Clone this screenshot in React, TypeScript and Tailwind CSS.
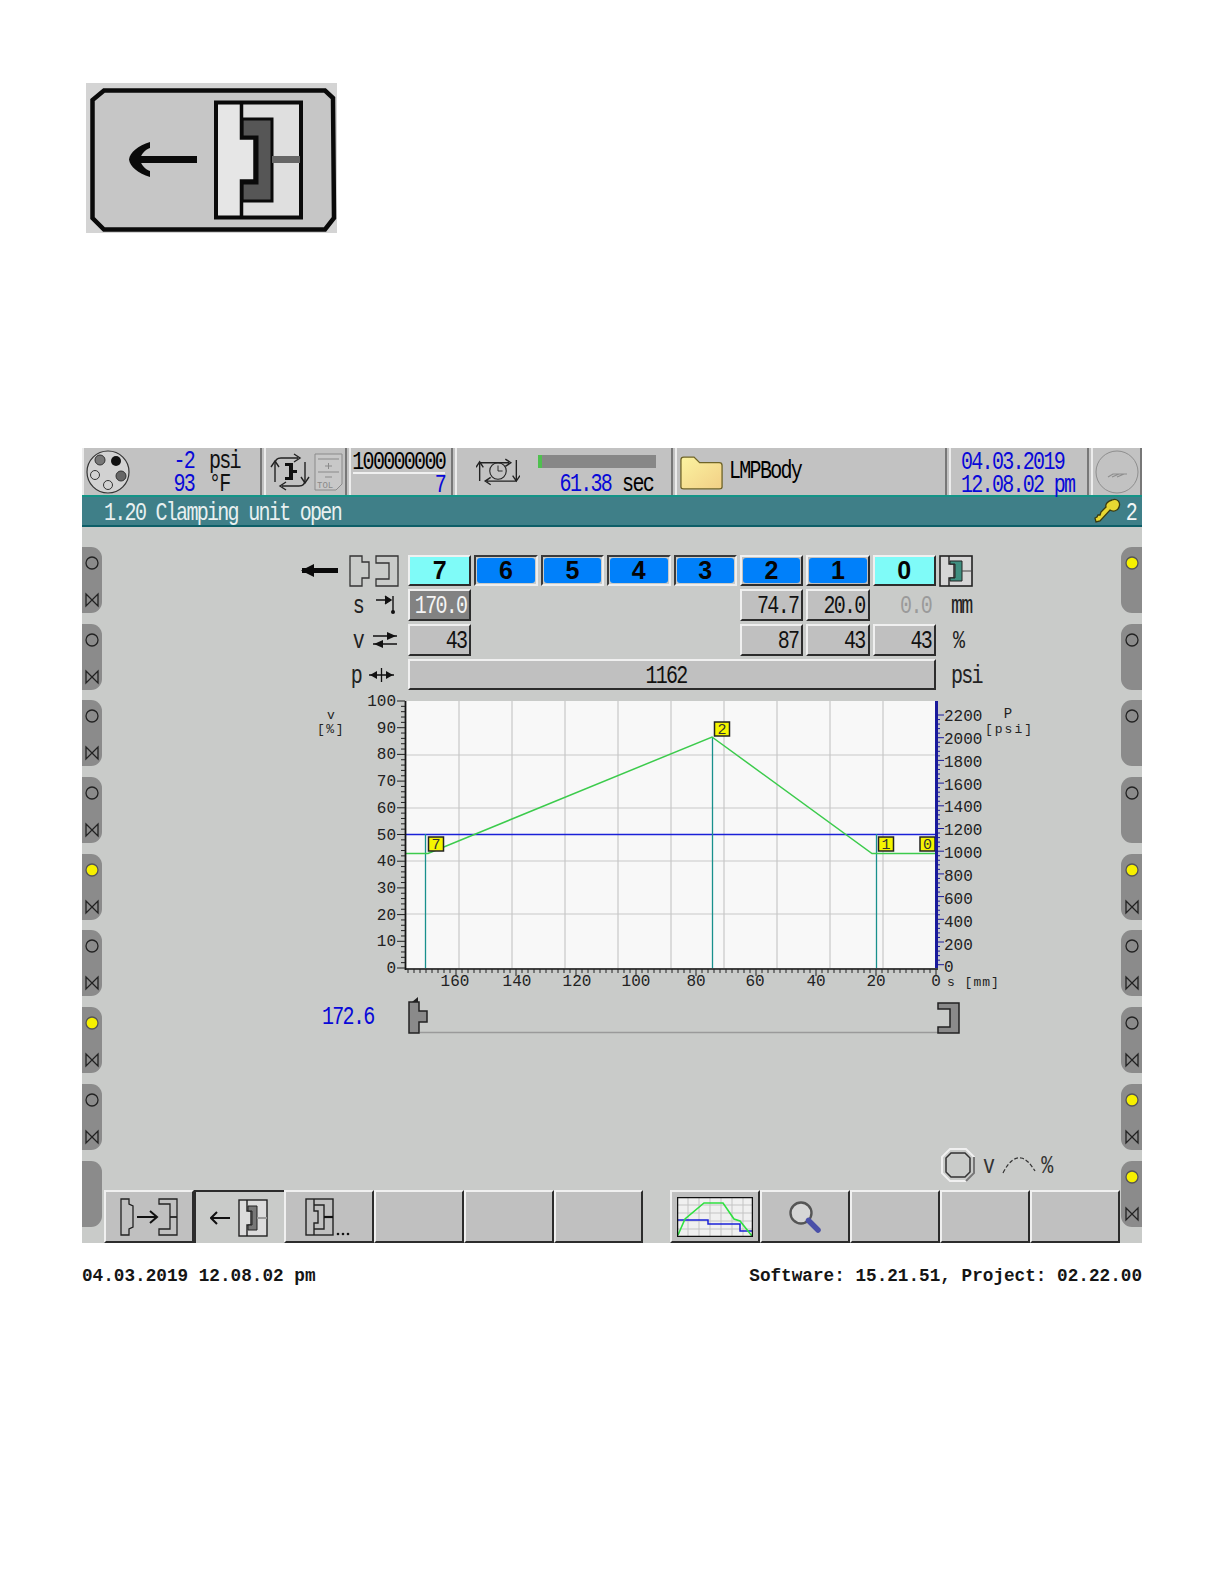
import React from "react";

const T = "inline-block leading-none text-[20px] tracking-[-1.7px] scale-y-125 translate-y-[2px] [font-family:'Liberation_Mono',monospace]";
const TS = "inline-block leading-[16px] text-[20px] tracking-[-1.7px] scale-y-125 translate-y-[2px] [font-family:'Liberation_Mono',monospace]";
const RAISED = "border-2 border-t-[#f0f0f0] border-l-[#f0f0f0] border-r-[#2c2c2c] border-b-[#2c2c2c] bg-[#c0c0c0]";
const SUNK = "border-2 border-t-[#3a3a3a] border-l-[#3a3a3a] border-r-[#eeeeee] border-b-[#eeeeee] bg-[#c9cbc9]";
const STAT = "border-l-2 border-r-2 border-l-[#ececec] border-r-[#777777] bg-[#c2c2c2] h-full relative flex items-center";

function Pill({ side, yellow, bow }: { side: "l" | "r"; yellow?: boolean; bow?: boolean }) {
  return (
    <div className={side === "l" ? "h-[66px] w-[20px] bg-[#8b8b8b] rounded-r-[11px] flex flex-col items-center pt-[8px] pr-[1px]" : "h-[66px] w-[21px] ml-[1px] bg-[#8b8b8b] rounded-l-[11px] flex flex-col items-center pt-[8px] pl-[1px]"}>
      <svg width="16" height="16" viewBox="0 0 16 16">
        <circle cx="8" cy="8" r="6" fill={yellow ? "#f6f000" : "none"} stroke={yellow ? "#555" : "#222"} strokeWidth="1.3" />
      </svg>
      {bow && (
        <svg width="16" height="16" viewBox="0 0 16 16" className="mt-[21px]">
          <path d="M2 2 L14 14 V2 L2 14 Z" fill="none" stroke="#222" strokeWidth="1.3" />
        </svg>
      )}
    </div>
  );
}

function ZoneBtn({ n, mode }: { n: string; mode: "cyan" | "blueUp" | "blueDown" }) {
  const cls = mode === "blueDown" ? SUNK : RAISED;
  const inner = mode === "cyan" ? "bg-[#7ffbf8] m-0" : "bg-[#0080fa] rounded-[3px] m-[1px]";
  return (
    <div className={`h-[31px] flex ${cls}`}>
      <div className={`flex-1 flex items-center justify-center ${inner}`}>
        <span className="leading-none text-[25px] font-bold text-[#050505] [font-family:'Liberation_Sans',sans-serif]">{n}</span>
      </div>
    </div>
  );
}

function Val({ v, cls, text }: { v: string; cls?: string; text?: string }) {
  return (
    <div className={`h-[32px] flex items-center justify-end pr-[3px] ${cls ?? ""} ${RAISED}`}>
      <span className={`${T} ${text ?? "text-[#111]"}`}>{v}</span>
    </div>
  );
}

function BigMold({ viewBox, w, h }: { viewBox: string; w: number; h: number }) {
  return (
    <svg width={w} height={h} viewBox={viewBox}>
      <rect x="86" y="83" width="251" height="150" fill="#d4d4d4" />
      <polygon points="104,90.5 325,90.5 333,98 334,218 325,229.5 104,229.5 92.5,218 92.5,100" fill="#c6c6c6" stroke="#0a0a0a" strokeWidth="4.5" />
      <rect x="216" y="102.5" width="85" height="115" fill="#dfdfdf" stroke="#0a0a0a" strokeWidth="4" />
      <path d="M218 105 H241.5 V138 H255 V181 H241.5 V215 H218 Z" fill="#e6e6e6" stroke="none" />
      <path d="M242 119 H272 V201 H242 V183 H257 V137 H242 Z" fill="#565656" stroke="#0a0a0a" strokeWidth="3" />
      <rect x="272" y="156" width="28" height="7" fill="#666" />
      <path d="M241.5 102 V138 H255 V181 H241.5 V218" fill="none" stroke="#0a0a0a" strokeWidth="3.5" />
      <rect x="136" y="156" width="61" height="7" fill="#0a0a0a" />
      <path d="M150 142 C138 146 130 152 129 159.5 C130 167 138 173 150 177 L150 171 C145 169 141 165 140 159.5 C141 154 145 150 150 148 Z" fill="#0a0a0a" />
    </svg>
  );
}

const vLabels = [100, 90, 80, 70, 60, 50, 40, 30, 20, 10, 0];
const pLabels = [2200, 2000, 1800, 1600, 1400, 1200, 1000, 800, 600, 400, 200, 0];
const gridX = [459, 512, 565, 618, 671, 724, 777, 830, 883];
const gridY = [755, 808, 861, 914];

function Marker({ x, y, n }: { x: number; y: number; n: string }) {
  return (
    <g>
      <rect x={x} y={y} width="15" height="14" fill="#f5f500" stroke="#222" strokeWidth="1.5" />
      <text x={x + 7.5} y={y + 11.5} textAnchor="middle" fontSize="15" fill="#333" fontFamily="'Liberation Mono',monospace">{n}</text>
    </g>
  );
}

function Chart() {
  const txt = { fontFamily: "'Liberation Mono',monospace", fontSize: 16, fill: "#222" };
  return (
    <svg width="730" height="307" viewBox="310 690 730 307" className="block">
      <rect x="405" y="701" width="531" height="267" fill="#f8f8f8" />
      {gridX.map((x) => <line key={x} x1={x} x2={x} y1="701" y2="968" stroke="#c8c8c8" strokeWidth="1.2" />)}
      {gridY.map((y) => <line key={y} x1="405" x2="936" y1={y} y2={y} stroke="#c8c8c8" strokeWidth="1.2" />)}
      <line x1="405" x2="936" y1="834.5" y2="834.5" stroke="#1a20d8" strokeWidth="1.3" />
      <line x1="425.5" x2="425.5" y1="834" y2="968" stroke="#18908c" strokeWidth="1.3" />
      <line x1="712.5" x2="712.5" y1="737" y2="968" stroke="#18908c" strokeWidth="1.3" />
      <line x1="876.5" x2="876.5" y1="834" y2="968" stroke="#18908c" strokeWidth="1.3" />
      <polyline points="405,853.5 428,853.5 712,737 872,853.5 936,853.5" fill="none" stroke="#3ccb4c" strokeWidth="1.5" />
      <Marker x={428.5} y={837} n="7" />
      <Marker x={714.5} y={722} n="2" />
      <Marker x={878.5} y={837} n="1" />
      <Marker x={920} y={837} n="0" />

      <line x1="405.5" x2="405.5" y1="701" y2="970" stroke="#151515" strokeWidth="1.8" />
      <line x1="405" x2="938" y1="969" y2="969" stroke="#151515" strokeWidth="1.6" />
      {Array.from({ length: 51 }, (_, i) => (
        <line key={i} x1={i % 5 === 0 ? 397 : 401} x2="405" y1={701 + i * 5.34} y2={701 + i * 5.34} stroke="#222" strokeWidth="1" />
      ))}
      {vLabels.map((v, i) => (
        <text key={v} x="396" y={706 + i * 26.7} textAnchor="end" {...txt}>{v}</text>
      ))}
      {Array.from({ length: 89 }, (_, i) => (
        <line key={i} x1={936 - i * 6} x2={936 - i * 6} y1="969" y2={i % 10 === 0 ? 976 : 973} stroke="#222" strokeWidth="1" />
      ))}
      <text x="455" y="986" textAnchor="middle" {...txt}>160</text>
      <text x="517" y="986" textAnchor="middle" {...txt}>140</text>
      <text x="577" y="986" textAnchor="middle" {...txt}>120</text>
      <text x="636" y="986" textAnchor="middle" {...txt}>100</text>
      <text x="696" y="986" textAnchor="middle" {...txt}>80</text>
      <text x="755" y="986" textAnchor="middle" {...txt}>60</text>
      <text x="816" y="986" textAnchor="middle" {...txt}>40</text>
      <text x="876" y="986" textAnchor="middle" {...txt}>20</text>
      <text x="936" y="986" textAnchor="middle" {...txt}>0</text>
      <text x="947" y="986" {...txt} fontSize="13" letterSpacing="1">s [mm]</text>

      <line x1="936.5" x2="936.5" y1="701" y2="968" stroke="#1a1a9c" strokeWidth="3" />
      {Array.from({ length: 56 }, (_, i) => (
        <line key={i} x1="937" x2={i % 5 === 0 ? 944 : 940} y1={715 + i * 4.54} y2={715 + i * 4.54} stroke="#1a1a9c" strokeWidth="1" />
      ))}
      {pLabels.map((v, i) => (
        <text key={v} x="944" y={721 + i * 22.85} {...txt}>{v}</text>
      ))}
      <text x="331" y="719" textAnchor="middle" {...txt} fontSize="13">v</text>
      <text x="331" y="733" textAnchor="middle" {...txt} fontSize="13" letterSpacing="1.5">[%]</text>
      <text x="1008" y="718" textAnchor="middle" {...txt} fontSize="14">P</text>
      <text x="985" y="733" {...txt} fontSize="13" letterSpacing="2">[psi]</text>
    </svg>
  );
}

function Toolbar() {
  const plain = `h-[53px] w-[90px] ${RAISED}`;
  return (
    <div className="flex h-[53px] mt-auto w-[1016px]">
      <div className={`${plain} flex items-center justify-center`}>
        <svg width="60" height="40" viewBox="0 0 60 40">
          <path d="M2 2 H10 V7 L14 9 V30 L10 32 V38 H2 Z" fill="none" stroke="#222" strokeWidth="1.3" />
          <path d="M40 2 H58 V38 H40 V32 H51 V7 H40 Z" fill="none" stroke="#222" strokeWidth="1.3" />
          <path d="M51 20 H58" stroke="#222" strokeWidth="1.8" />
          <path d="M18 20 H37 M31 14 L38 20 L31 26" fill="none" stroke="#111" strokeWidth="2" />
        </svg>
      </div>
      <div className="h-[53px] w-[90px] border-t-2 border-l-2 border-t-[#2c2c2c] border-l-[#2c2c2c] bg-[#c9cbc9] flex items-center justify-center">
        <svg width="60" height="40" viewBox="0 0 60 40">
          <path d="M1 20 H20 M7 14 L1 20 L7 26" fill="none" stroke="#111" strokeWidth="2" />
          <rect x="29" y="2" width="28" height="36" fill="#dcdcdc" stroke="#222" strokeWidth="1.4" />
          <path d="M37 2 V13 H41 V27 H37 V38" fill="none" stroke="#222" strokeWidth="1.4" />
          <path d="M38 8 H47 V32 H38 V27 H42 V13 H38 Z" fill="#777" stroke="#222" strokeWidth="1" />
          <path d="M47 20 H57" stroke="#999" strokeWidth="2" />
        </svg>
      </div>
      <div className={`${plain} flex items-center justify-center`}>
        <svg width="60" height="40" viewBox="0 0 60 40">
          <rect x="7" y="2" width="27" height="36" fill="none" stroke="#222" strokeWidth="1.4" />
          <path d="M15 2 V14 H19 V26 H15 V38" fill="none" stroke="#222" strokeWidth="1.4" />
          <path d="M15 8 H25 V32 H15" fill="none" stroke="#222" strokeWidth="1.4" />
          <path d="M25 20 H34" stroke="#111" strokeWidth="2.2" />
          <circle cx="39" cy="37" r="1.3" fill="#111" /><circle cx="44" cy="37" r="1.3" fill="#111" /><circle cx="49" cy="37" r="1.3" fill="#111" />
        </svg>
      </div>
      <div className={plain} />
      <div className={plain} />
      <div className={plain} />
      <div className="w-[27px] h-[53px]" />
      <div className={`${plain} flex items-center justify-center`}>
        <svg width="76" height="40" viewBox="0 0 76 40" className="bg-[#f0f0f0]">
          {[11, 22, 33, 44, 55, 66].map((x) => <line key={x} x1={x} x2={x} y1="0" y2="40" stroke="#c4c4c4" />)}
          {[8, 16, 24, 32].map((y) => <line key={y} x1="0" x2="76" y1={y} y2={y} stroke="#c4c4c4" />)}
          <polyline points="1,23 31,23 31,27 63,27 63,34 75,34" fill="none" stroke="#1a20d8" strokeWidth="1.5" />
          <polyline points="1,38 8,22 27,6 46,6 57,22 63,24 75,39" fill="none" stroke="#2fe040" strokeWidth="1.6" />
          <rect x="0.5" y="0.5" width="75" height="39" fill="none" stroke="#111" strokeWidth="1.5" />
        </svg>
      </div>
      <div className={`${plain} flex items-center justify-center`}>
        <svg width="36" height="36" viewBox="0 0 36 36">
          <circle cx="14" cy="14" r="10.5" fill="#d6d6d6" stroke="#555" strokeWidth="2.4" />
          <path d="M21.5 21.5 L31 31" stroke="#4a50a8" strokeWidth="5.5" strokeLinecap="round" />
        </svg>
      </div>
      <div className={plain} />
      <div className={plain} />
      <div className={plain} />
    </div>
  );
}

export default function App() {
  const leftPills = [false, false, false, false, true, false, true, false];
  const rightPills = [true, false, false, false, true, false, false, true, true];
  return (
    <div className="w-[1224px] h-[1584px] bg-white pt-[83px] overflow-hidden [font-family:'Liberation_Mono',monospace]">
      <div className="ml-[86px] h-[150px]">
        <BigMold viewBox="86 83 251 150" w={251} h={150} />
      </div>

      <div className="ml-[82px] mt-[215px] w-[1060px]">
        {/* status bar */}
        <div className="flex h-[47px] bg-[#c2c2c2] gap-[2px]">
          <div className={`${STAT} w-[180px] border-l-0`}>
            <svg width="46" height="46" viewBox="0 0 46 46" className="ml-[1px]">
              <circle cx="23" cy="23" r="21" fill="#d2d2d2" stroke="#333" strokeWidth="1.2" />
              <circle cx="15" cy="11" r="5" fill="#777" stroke="#333" />
              <circle cx="31" cy="12" r="5" fill="#111" />
              <circle cx="36" cy="27" r="5" fill="#666" stroke="#333" />
              <circle cx="10" cy="26" r="4.5" fill="none" stroke="#333" />
              <circle cx="23" cy="36" r="4.5" fill="none" stroke="#333" />
            </svg>
            <div className="ml-[27px] flex flex-col gap-[7px] text-[#111]">
              <div className="flex w-[88px]"><span className={`${TS} w-[36px] text-right text-[#0808d8]`}>-2</span><span className={`${TS} ml-[15px] tracking-[-1.5px]`}>psi</span></div>
              <div className="flex w-[88px]"><span className={`${TS} w-[36px] text-right text-[#0808d8]`}>93</span><span className={`${TS} ml-[15px]`}>°F</span></div>
            </div>
          </div>
          <div className={`${STAT} w-[83px] justify-center gap-[2px]`}>
            <svg width="44" height="40" viewBox="0 0 44 40">
              <path d="M7 30 V12 Q7 6 13 6 H30 M26 2 L32 6 L26 10" fill="none" stroke="#222" strokeWidth="1.4" />
              <path d="M37 10 V28 Q37 34 31 34 H14 M18 30 L12 34 L18 38" fill="none" stroke="#222" strokeWidth="1.4" />
              <path d="M3 15 L7 9 L11 15 M33 25 L37 31 L41 25" fill="none" stroke="#222" strokeWidth="1.4" />
              <path d="M17 11 H25 V18 H29 V21 H25 V28 H17 V25 H21 V14 H17 Z" fill="#111" />
            </svg>
            <svg width="29" height="38" viewBox="0 0 29 38">
              <path d="M1 1 H28 V31 L22 37 H1 Z" fill="#c8c8c8" stroke="#8a8a8a" />
              <path d="M4 6 H25 M4 19 H25 M14.5 10 V16 M11 13 H18 M11 24 H18" stroke="#8a8a8a" />
              <text x="3" y="35" fontSize="9" fill="#8a8a8a" fontFamily="'Liberation Mono',monospace">TOL</text>
            </svg>
          </div>
          <div className={`${STAT} w-[104px] flex-col items-end pr-[6px] pt-[5px]`}>
            <span className={`${TS} w-full text-right`}>100000000</span>
            <div className="absolute left-[2px] right-[6px] top-[24px] h-[2px] bg-[#f0f0f0]" />
            <span className={`${TS} mt-[7px] text-[#0808d8]`}>7</span>
          </div>
          <div className={`${STAT} w-[218px] items-start`}>
            <svg width="44" height="34" viewBox="0 0 48 34" className="ml-[19px] mt-[6px]">
              <circle cx="24" cy="17" r="9" fill="none" stroke="#222" strokeWidth="1.2" />
              <path d="M24 11 V17 H29" fill="none" stroke="#222" />
              <path d="M4 28 V8 H36 M32 4 L38 8 L32 12" fill="none" stroke="#222" strokeWidth="1.5" />
              <path d="M44 5 V28 H12 M16 24 L10 28 L16 32 M40 22 L44 28 L48 22 M0 13 L4 7 L8 13" fill="none" stroke="#222" strokeWidth="1.5" />
            </svg>
            <div className="ml-[18px] mt-[7px] flex flex-col w-[120px]">
              <div className="h-[13px] w-[118px] bg-[#878787] flex"><div className="w-[4px] bg-[#4fc04f]" /></div>
              <div className="mt-[5px] flex justify-end leading-none pr-[5px]">
                <span className={`${T} text-[#0808d8] tracking-[-1.4px]`}>61.38</span>
                <span className={`${T} ml-[11px]`}>sec</span>
              </div>
            </div>
          </div>
          <div className={`${STAT} w-[272px]`}>
            <svg width="43" height="38" viewBox="0 0 46 38" className="ml-[3px]">
              <defs>
                <linearGradient id="folderFill" x1="0" y1="0" x2="1" y2="1">
                  <stop offset="0" stopColor="#fbf3a0" />
                  <stop offset="1" stopColor="#f2cf86" />
                </linearGradient>
              </defs>
              <path d="M1 35 V6 Q1 3 4 3 H15 L21 9 H42 Q45 9 45 12 V35 Q45 37 42 37 H4 Q1 37 1 35 Z" fill="url(#folderFill)" stroke="#6f6428" strokeWidth="1.4" />
            </svg>
            <span className={`${T} ml-[6px] mb-[4px] tracking-[-1.4px]`}>LMPBody</span>
          </div>
          <div className={`${STAT} w-[140px] flex-col items-start pl-[10px] pt-[5px]`}>
            <span className={`${TS} text-[#0808d8] tracking-[-1.1px]`}>04.03.2019</span>
            <span className={`${TS} mt-[7px] text-[#0808d8] tracking-[-1.3px]`}>12.08.02 pm</span>
          </div>
          <div className={`${STAT} w-[51px] justify-center border-r-0`}>
            <svg width="44" height="44" viewBox="0 0 44 44">
              <circle cx="22" cy="22" r="21" fill="none" stroke="#8e8e8e" />
              <path d="M13 27 L18 24 H32 M17 27 L24 24 M22 27 L29 24" fill="none" stroke="#8e8e8e" strokeWidth="1.2" />
            </svg>
          </div>
        </div>

        {/* title bar */}
        <div className="h-[32px] bg-[#3f7f88] border-t-2 border-t-[#139486] border-b-2 border-b-[#0d5f68] flex items-center pl-[22px] pr-[6px]">
          <span className={`${T} mt-[2px] text-[#e8f0f0] tracking-[-1.5px]`}>1.20 Clamping unit open</span>
          <svg width="28" height="26" viewBox="0 0 28 26" className="ml-auto">
            <path d="M18 2 C23 0 27 4 25 9 C24 13 19 14 16 12 L6 23 L2 24 L1 20 L3 19 L4 17 L6 17 L7 14 L12 9 C11 6 14 3 18 2 Z" fill="#e8d832" stroke="#3a3a10" strokeWidth="1.3" />
          </svg>
          <span className={`${T} ml-[4px] mt-[2px] text-[#f2f6f6]`}>2</span>
        </div>

        {/* main */}
        <div className="flex h-[716px] bg-[#c9cbc9]">
          <div className="w-[22px] pt-[20px] flex flex-col gap-[10.7px]">
            {leftPills.map((y, i) => <Pill key={i} side="l" yellow={y} bow />)}
            <div className="h-[66px] w-[20px] bg-[#8b8b8b] rounded-r-[11px]" />
          </div>

          <div className="flex-1 flex flex-col pt-[28px]">
            <div className="flex flex-col gap-[3px]">
              <div className="flex h-[31px]">
                <div className="w-[304px] flex justify-end pr-[8px]">
                  <svg width="100" height="32" viewBox="0 0 100 32">
                    <rect x="2" y="13" width="36" height="5" fill="#0a0a0a" />
                    <path d="M1 15.5 L14 9 V22 Z" fill="#0a0a0a" />
                    <path d="M50 1 H62 V7 H69 V23 H62 V31 H50 Z" fill="#c9cbc9" stroke="#333" strokeWidth="1.3" />
                    <path d="M76 1 H98 V31 H76 V24 H89 V8 H76 Z" fill="#c9cbc9" stroke="#333" strokeWidth="1.3" />
                  </svg>
                </div>
                <div className="w-[528px] grid grid-cols-8 gap-x-[3px]">
                  <ZoneBtn n="7" mode="cyan" />
                  <ZoneBtn n="6" mode="blueDown" />
                  <ZoneBtn n="5" mode="blueDown" />
                  <ZoneBtn n="4" mode="blueDown" />
                  <ZoneBtn n="3" mode="blueDown" />
                  <ZoneBtn n="2" mode="blueUp" />
                  <ZoneBtn n="1" mode="blueUp" />
                  <ZoneBtn n="0" mode="cyan" />
                </div>
                <div className="ml-[3px]">
                  <svg width="34" height="32" viewBox="0 0 34 32">
                    <rect x="1" y="1" width="32" height="30" fill="#d6d6d6" stroke="#222" strokeWidth="1.6" />
                    <path d="M10 1 V9 H15 V23 H10 V31" fill="none" stroke="#222" strokeWidth="1.4" />
                    <path d="M11 6 H23 V26 H11 V23 H16 V9 H11 Z" fill="#3f8f80" stroke="#222" />
                    <path d="M23 16 H33" stroke="#444" />
                  </svg>
                </div>
              </div>

              <div className="flex h-[32px]">
                <div className="w-[304px] flex justify-end items-center pr-[11px] gap-[12px]">
                  <span className={`${T} text-[#222]`}>s</span>
                  <svg width="22" height="22" viewBox="0 0 22 22">
                    <path d="M1 6 H16 M10 2 L16 6 L10 10" fill="#111" stroke="#111" strokeWidth="1.4" />
                    <path d="M18 2 V17" stroke="#111" strokeWidth="1.4" />
                    <circle cx="18" cy="18" r="2" fill="#111" />
                  </svg>
                </div>
                <div className="w-[528px] grid grid-cols-8 gap-x-[3px]">
                  <Val v="170.0" cls="!bg-[#828282]" text="text-[#f4f4f4]" />
                  <div className="col-start-6"><Val v="74.7" /></div>
                  <Val v="20.0" />
                  <div className="flex items-center justify-end pr-[5px]"><span className={`${T} text-[#9a9a9a]`}>0.0</span></div>
                </div>
                <div className="ml-[15px] flex items-center"><span className={`${T} text-[#222]`}>mm</span></div>
              </div>

              <div className="flex h-[32px]">
                <div className="w-[304px] flex justify-end items-center pr-[11px] gap-[10px]">
                  <span className={`${T} text-[#222]`}>v</span>
                  <svg width="24" height="18" viewBox="0 0 24 18">
                    <path d="M0 5 H24 M24 13 H0" stroke="#111" strokeWidth="1.3" />
                    <path d="M23 5 L14 1 V9 Z M1 13 L10 9 V17 Z" fill="#111" />
                  </svg>
                </div>
                <div className="w-[528px] grid grid-cols-8 gap-x-[3px]">
                  <Val v="43" />
                  <div className="col-start-6"><Val v="87" /></div>
                  <Val v="43" />
                  <Val v="43" />
                </div>
                <div className="ml-[17px] flex items-center"><span className={`${T} text-[#222]`}>%</span></div>
              </div>

              <div className="flex h-[31px]">
                <div className="w-[304px] flex justify-end items-center pr-[14px] gap-[8px]">
                  <span className={`${T} text-[#222]`}>p</span>
                  <svg width="25" height="16" viewBox="0 0 25 16">
                    <path d="M0 8 H25 M12.5 1 V15" stroke="#111" strokeWidth="1.3" />
                    <path d="M1 8 L8 4 V12 Z M24 8 L17 4 V12 Z" fill="#111" />
                  </svg>
                </div>
                <div className={`w-[528px] flex items-center justify-center pr-[12px] ${RAISED}`}>
                  <span className={`${T} text-[#111]`}>1162</span>
                </div>
                <div className="ml-[15px] flex items-center"><span className={`${T} text-[#222] tracking-[-0.5px]`}>psi</span></div>
              </div>
            </div>

            <div className="ml-[206px]">
              <Chart />
            </div>

            <div className="flex items-end h-[37px] ml-[218px]">
              <span className={`${T} text-[#0808d8] w-[86px] mb-[8px] tracking-[-1.3px]`}>172.6</span>
              <svg width="560" height="37" viewBox="408 997 560 37" className="block">
                <path d="M412 1002 L418 997 V1002 Z" fill="#222" />
                <line x1="420" x2="938" y1="1032.5" y2="1032.5" stroke="#9a9a9a" strokeWidth="1.6" />
                <path d="M409 1002 H419 V1011 H427 V1022 H419 V1033 H409 Z" fill="#8a8a8a" stroke="#222" strokeWidth="1.5" />
                <path d="M938 1003 H959 V1033 H938 V1027 H950 V1009 H938 Z" fill="#8a8a8a" stroke="#222" strokeWidth="1.5" />
              </svg>
            </div>

            <div className="flex items-center ml-[837px] mt-[114px] gap-[8px]">
              <svg width="34" height="34" viewBox="0 0 34 34">
                <polygon points="9,1 25,1 33,9 33,25 25,33 9,33 1,25 1,9" fill="#c9cbc9" stroke="#f0f0f0" strokeWidth="2" />
                <polygon points="10,5 24,5 29,10 29,24 24,29 10,29 5,24 5,10" fill="#c9cbc9" stroke="#333" strokeWidth="1.5" />
                <path d="M25 33 L33 25 V9" fill="none" stroke="#777" strokeWidth="2" />
              </svg>
              <span className={`${T} text-[#333]`}>v</span>
              <svg width="36" height="20" viewBox="0 0 36 20">
                <path d="M2 18 C8 6 14 2 20 3 C26 4 30 10 34 16" fill="none" stroke="#333" strokeWidth="1.2" strokeDasharray="4 2" />
              </svg>
              <span className={`${T} text-[#333] -ml-[4px]`}>%</span>
            </div>

            <Toolbar />
          </div>

          <div className="w-[22px] pt-[20px] flex flex-col gap-[10.7px]">
            {rightPills.map((y, i) => <Pill key={i} side="r" yellow={y} bow={i > 3} />)}
          </div>
        </div>

        {/* footer */}
        <div className="flex justify-between mt-[25px] text-[17.7px] leading-none font-bold text-[#151515]">
          <span>04.03.2019 12.08.02 pm</span>
          <span>Software: 15.21.51, Project: 02.22.00</span>
        </div>
      </div>
    </div>
  );
}
